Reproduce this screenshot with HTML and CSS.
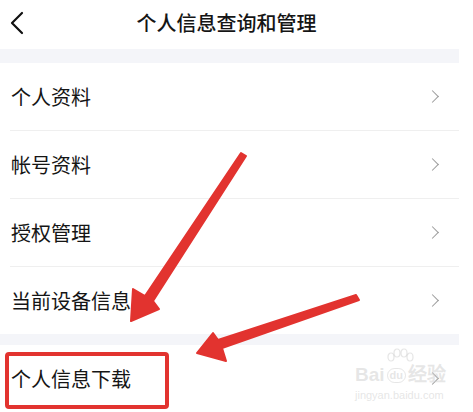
FILE: index.html
```html
<!DOCTYPE html>
<html lang="zh-CN">
<head>
    <meta charset="UTF-8">
    <meta name="viewport" content="width=device-width, initial-scale=1.0">
    <title>个人信息查询和管理</title>
    <link rel="stylesheet" href="styles.css">
</head>

<body>
    <div id="page">
        <div id="header">
            <svg class="back" width="14" height="24" viewBox="0 0 14 24">
                <polyline points="12,2 2,12 12,22" fill="none" stroke="#111" stroke-width="2.2" stroke-linecap="round" stroke-linejoin="round"/>
            </svg>
            <div class="title">个人信息查询和管理</div>
        </div>
        <div class="band"></div>
        <div class="group">
            <div class="row"><span>个人资料</span><i class="arrow"></i></div>
            <div class="row"><span>帐号资料</span><i class="arrow"></i></div>
            <div class="row"><span>授权管理</span><i class="arrow"></i></div>
            <div class="row"><span>当前设备信息</span><i class="arrow"></i></div>
        </div>
        <div class="band small"></div>
        <div class="group">
            <div class="row"><span>个人信息下载</span><i class="arrow"></i></div>
        </div>
    </div>

    <div id="highlight"></div>

    <div id="watermark">
        <svg class="paw" width="30" height="16" viewBox="0 0 30 16">
            <g fill="none" stroke="rgba(205,205,205,0.5)" stroke-width="1.2">
                <ellipse cx="6" cy="9" rx="3" ry="4"/>
                <ellipse cx="12" cy="5" rx="3" ry="4"/>
                <ellipse cx="19" cy="5" rx="3" ry="4"/>
                <ellipse cx="25" cy="9" rx="3" ry="4"/>
            </g>
        </svg>
        <div class="wm-top">Bai<span class="du">du</span>经验</div>
        <div class="wm-url">jingyan.baidu.com</div>
    </div>

    <svg id="marks" width="473" height="412" viewBox="0 0 473 412">
        <polygon points="241,153 246,156 153,301 159,309 131,321 133,289 145,296" fill="#e2332f" stroke="#e2332f" stroke-width="2" stroke-linejoin="round"/>
        <polygon points="356,295 359,300 222,348 226,361 197,353 213,333 218,340" fill="#e2332f" stroke="#e2332f" stroke-width="2" stroke-linejoin="round"/>
    </svg>
</body>
</html>
```

FILE: styles.css
```css
* {
    box-sizing: border-box;
}

body {
    margin: 0;
    padding: 0;
    background-color: #fff;
    font-family: "Noto Sans CJK SC", "Noto Sans", sans-serif;
    color: #151515;
    width: 473px;
    height: 412px;
    overflow: hidden;
    position: relative;
}

#page {
    width: 459px;
}

#header {
    height: 49px;
    display: flex;
    align-items: center;
    padding-left: 10px;
    padding-bottom: 4px;
}

.back {
    display: block;
}

.title {
    flex: 1;
    text-align: center;
    font-size: 20px;
    font-weight: 500;
    margin-right: 30px;
}

.band {
    height: 14px;
    background-color: #f4f5f9;
}

.band.small {
    height: 11px;
}

.group {
    padding-left: 10px;
}

.row {
    height: 68px;
    display: flex;
    align-items: center;
    justify-content: space-between;
    border-bottom: 1px solid #efefef;
    font-size: 20px;
    padding-left: 1px;
    padding-right: 22px;
}

.row:last-child {
    border-bottom: none;
    height: 67px;
}

.arrow {
    width: 9px;
    height: 9px;
    border-top: 1.5px solid #9a9a9a;
    border-right: 1.5px solid #9a9a9a;
    transform: rotate(45deg);
}

#highlight {
    position: absolute;
    left: 5px;
    top: 352px;
    width: 164px;
    height: 57px;
    border: 4px solid #e2332f;
    border-radius: 4px;
}

#watermark {
    position: absolute;
    left: 355px;
    top: 348px;
    width: 92px;
    color: rgba(205, 205, 205, 0.5);
    font-family: "Liberation Sans", sans-serif;
}

.paw {
    display: block;
    margin-left: 30px;
}

.wm-top {
    font-size: 19px;
    font-weight: bold;
    line-height: 22px;
    white-space: nowrap;
}

.du {
    display: inline-block;
    font-size: 11px;
    line-height: 13px;
    border: 1.2px solid rgba(205, 205, 205, 0.5);
    border-radius: 8px;
    padding: 0 2px;
    margin: 0 2px;
    vertical-align: middle;
}

.wm-url {
    font-size: 11px;
    margin-top: 3px;
    white-space: nowrap;
}

#marks {
    position: absolute;
    left: 0;
    top: 0;
}
```
